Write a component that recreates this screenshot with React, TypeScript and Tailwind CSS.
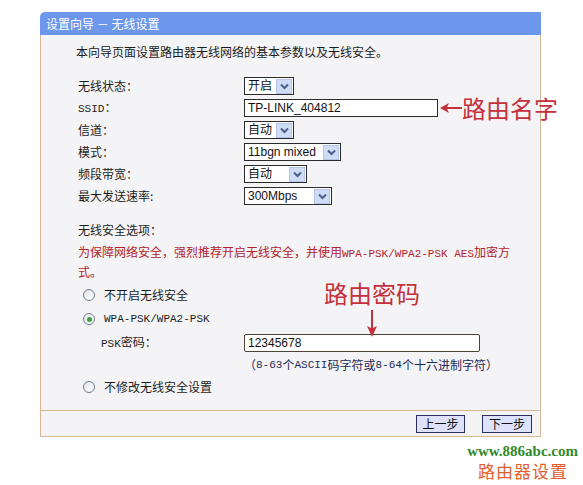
import React from "react";

const cjk = "font-['Noto_Sans_CJK_SC',sans-serif]";
const mono = "font-['Liberation_Mono',monospace] text-[11px]";

const Chevron = () => (
  <span className="ml-auto mr-[1px] flex h-[15px] w-[16px] items-center justify-center border border-[#b3c5e8] bg-[#cfdcf6]">
    <svg width="9" height="7" viewBox="0 0 9 7">
      <path d="M1 1.5 L4.5 5 L8 1.5" fill="none" stroke="#4a5f8c" strokeWidth="2" />
    </svg>
  </span>
);

const Select = ({ value, width }: { value: string; width: string }) => (
  <div className={`flex h-[18px] items-center border border-[#2b2b2b] bg-white pl-[3px] ${width}`}>
    <span className="font-['Liberation_Sans','Noto_Sans_CJK_SC',sans-serif] text-[12px] text-[#111]">{value}</span>
    <Chevron />
  </div>
);

const Radio = ({ checked }: { checked?: boolean }) => (
  <span className="flex h-[12px] w-[12px] items-center justify-center rounded-full border border-[#6d7c8e] bg-gradient-to-br from-[#e4e6ea] to-white">
    {checked && <span className="h-[5px] w-[5px] rounded-full bg-[#3f9f3f]" />}
  </span>
);

const rows = [
  { label: "无线状态：", ctl: <Select value="开启" width="w-[50px]" /> },
  {
    label: (
      <>
        <span className={mono}>SSID</span>：
      </>
    ),
    ctl: (
      <div className="relative">
        <div className="flex h-[18px] w-[194px] items-center border border-[#2b2b2b] bg-white pl-[3px] font-['Liberation_Sans',sans-serif] text-[12px] text-[#111]">
          TP-LINK_404812
        </div>
        <div className="absolute left-[196px] top-[-4px] flex items-center whitespace-nowrap">
          <svg width="22" height="12" viewBox="0 0 22 12">
            <path d="M0 6 L9 1 L7 5 L22 5 L22 7 L7 7 L9 11 Z" fill="#c4303c" />
          </svg>
          <span className={`${cjk} text-[24px] leading-[26px] text-[#c4303c]`}>路由名字</span>
        </div>
      </div>
    ),
  },
  { label: "信道：", ctl: <Select value="自动" width="w-[50px]" /> },
  { label: "模式：", ctl: <Select value="11bgn mixed" width="w-[97px]" /> },
  { label: "频段带宽：", ctl: <Select value="自动" width="w-[63px]" /> },
  { label: "最大发送速率:", ctl: <Select value="300Mbps" width="w-[88px]" /> },
];

export default function App() {
  return (
    <div className={`h-[485px] w-[583px] overflow-hidden bg-white ${cjk} text-[12px] text-[#1c1c1c]`}>
      <div className="ml-[40px] mt-[12px] w-[501px]">
        <div className="flex h-[23px] items-center rounded-tl-[5px] bg-[#6c97ea] pl-[6px] text-[12px] text-white">
          设置向导 － 无线设置
        </div>
        <div className="border-x border-b border-[#d7b894] bg-[#f4f4f6]">
          <div className="relative h-[375px] pl-[35px] pt-[8px]">
            <div className="h-[18px] leading-[18px]">本向导页面设置路由器无线网络的基本参数以及无线安全。</div>
            <div className="mt-[14px] pl-[2px]">
              {rows.map((r, i) => (
                <div key={i} className="flex h-[22px] items-center">
                  <div className="w-[166px]">{r.label}</div>
                  {r.ctl}
                </div>
              ))}
            </div>
            <div className="mt-[14px] h-[18px] pl-[2px] leading-[18px]">无线安全选项：</div>
            <div className="mt-[4px] pl-[2px] leading-[18px] text-[#b3222b]">
              为保障网络安全，强烈推荐开启无线安全，并使用<span className={mono}>WPA-PSK/WPA2-PSK AES</span>加密方
              <br />
              式。
            </div>
            <div className="mt-[2px] pl-[7px]">
              <div className="flex h-[24px] items-center gap-[9px]">
                <Radio />
                <span>不开启无线安全</span>
              </div>
              <div className="flex h-[24px] items-center gap-[9px]">
                <Radio checked />
                <span className={mono}>WPA-PSK/WPA2-PSK</span>
              </div>
              <div className="flex h-[24px] items-center pl-[18px]">
                <div className="w-[143px]">
                  <span className={mono}>PSK</span>密码：
                </div>
                <div className="flex h-[18px] w-[236px] items-center rounded-[2px] border border-[#4a4338] bg-white pl-[3px] font-['Liberation_Sans',sans-serif] text-[12px] text-[#111]">
                  12345678
                </div>
              </div>
              <div className="flex h-[20px] items-center pl-[161px] text-[#1e2a56]">
                （<span className={mono}>8-63</span>个<span className={mono}>ASCII</span>码字符或<span className={mono}>8-64</span>个十六进制字符）
              </div>
              <div className="flex h-[24px] items-center gap-[9px]">
                <Radio />
                <span>不修改无线安全设置</span>
              </div>
            </div>
            <div className="absolute left-[283px] top-[245px] flex flex-col items-center">
              <span className={`${cjk} text-[24px] leading-[26px] text-[#c4303c]`}>路由密码</span>
              <svg width="12" height="28" viewBox="0 0 12 28" className="mt-[4px]">
                <path d="M5 0 L7 0 L7 18 L11 16 L6 27 L1 16 L5 18 Z" fill="#c4303c" />
              </svg>
            </div>
          </div>
          <div className="flex h-[26px] items-center justify-end gap-[17px] border-t border-[#d7b894] pr-[8px]">
            <button className="h-[18px] w-[49px] border border-[#2a2f5e] bg-[#dde2fa] text-[12px] leading-[16px] text-[#111]">上一步</button>
            <button className="h-[18px] w-[50px] border border-[#2a2f5e] bg-[#dde2fa] text-[12px] leading-[16px] text-[#111]">下一步</button>
          </div>
        </div>
      </div>
      <div className="mt-[5px] flex flex-col items-end pr-[5px]">
        <div className="font-['Liberation_Serif',serif] text-[15px] font-bold leading-[18px] text-[#2f8a2a]">www.886abc.com</div>
        <div className="mr-[10px] mt-[1px] text-[17px] leading-[20px] tracking-[1px] text-[#e2602c]">路由器设置</div>
      </div>
    </div>
  );
}
